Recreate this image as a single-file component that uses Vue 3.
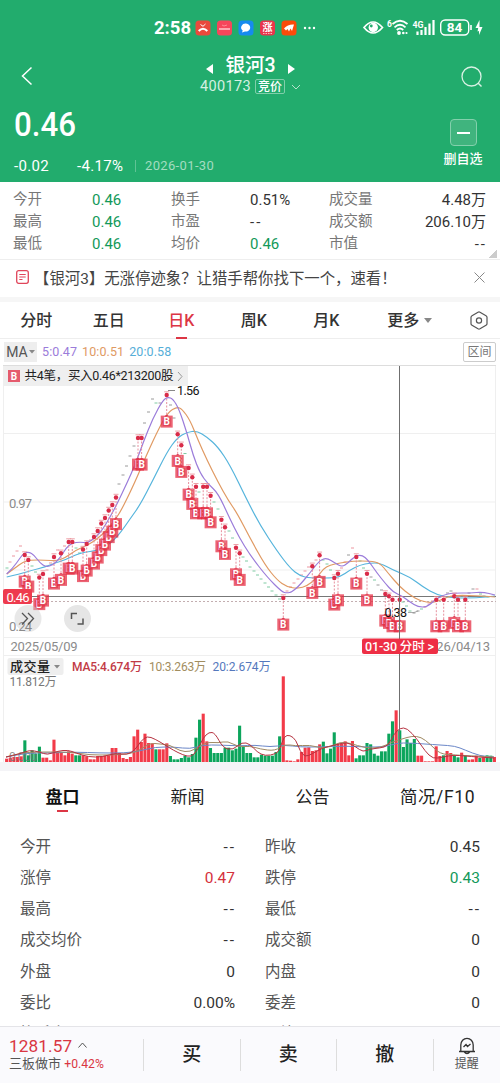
<script setup>
const quotes = [
  ['今开', '0.46', '换手', '0.51%', '成交量', '4.48万'],
  ['最高', '0.46', '市盈', '--', '成交额', '206.10万'],
  ['最低', '0.46', '均价', '0.46', '市值', '--']
]

const periods = ['分时', '五日', '日K', '周K', '月K']
const tabs = ['盘口', '新闻', '公告', '简况/F10']

const details = [
  ['今开', '--', '昨收', '0.45'],
  ['涨停', '0.47', '跌停', '0.43'],
  ['最高', '--', '最低', '--'],
  ['成交均价', '--', '成交额', '0'],
  ['外盘', '0', '内盘', '0'],
  ['委比', '0.00%', '委差', '0'],
  ['换手率', '', '量比', '']
]

const color = (v) => ({ up: v === '0.47', down: v === '0.43' || v === '0.46', dash: v === '--' })

// buy points: x, y of the dot on the candle
const buys = [
  [24.7, 555], [28.3, 560], [39.3, 577.5], [43, 574], [54, 557], [61, 553.3], [68.7, 542], [72.3, 542],
  [83, 549.5], [86.7, 544], [94, 537], [97.7, 531], [101.3, 523.5], [105, 518], [108.7, 510.5], [112.3, 505],
  [116, 497.5], [138, 438], [141.6, 438], [166.7, 395], [177.7, 434.3], [181.3, 445.3], [188.6, 468],
  [192.3, 477.3], [196, 486.7], [203.2, 486.7], [207, 486.7], [210.6, 495.7], [221.4, 519.7], [225, 527.3],
  [236, 547.7], [239.7, 553.3], [283.3, 598], [312.3, 566.3], [319.6, 555.3], [334.3, 578], [338, 573.7],
  [356.3, 557], [367, 573.7], [385.3, 594], [389, 596.3], [392.5, 599.7], [399.7, 599.7], [436.3, 599.7],
  [443.7, 599.7], [454.3, 596.3], [458, 599.7], [465.3, 599.7]
]

// flat candles
const ticks = [
  [7, 568, 'g'], [10, 562, 'r'], [13.5, 556, 'r'], [17, 551, 'r'], [20.5, 546, 'r'], [32, 566, 'g'], [35.5, 572, 'g'],
  [47, 570, 'r'], [50.5, 563, 'r'], [57.5, 550, 'r'], [64.5, 546, 'r'], [76, 548, 'g'], [79.5, 553, 'g'], [90.5, 540, 'r'],
  [119, 484, 'k'], [123, 475, 'k'], [126.5, 466, 'k'], [130, 456, 'k'], [134, 446, 'k'], [144.5, 423, 'k'],
  [148.5, 412, 'k'], [152.5, 399, 'k'], [156, 403, 'g'], [160, 403, 'k'], [170.5, 405, 'k'], [174, 418, 'k'],
  [185, 453.5, 'g'], [199, 492, 'g'], [214, 502, 'g'], [218, 509, 'g'], [229, 531, 'g'], [232.5, 538, 'g'],
  [243, 557, 'g'], [246.5, 561, 'g'], [250, 567, 'g'], [254, 571, 'g'], [257.5, 575, 'g'], [261, 579, 'g'],
  [265, 583, 'g'], [268.5, 587, 'g'], [272, 591, 'g'], [276, 595, 'g'], [279.5, 599, 'g'], [287, 591, 'r'],
  [290.5, 587, 'r'], [294, 583, 'r'], [298, 579, 'r'], [301.5, 575, 'r'], [305, 571, 'r'], [308.5, 567, 'r'],
  [316, 560, 'r'], [323, 560, 'g'], [327, 564, 'g'], [330.5, 570, 'g'], [341.5, 568, 'r'], [345, 562, 'r'],
  [348.5, 555, 'k'], [352.5, 548, 'r'], [360, 561, 'g'], [363.5, 568, 'g'], [371, 577, 'k'], [374.5, 580, 'g'],
  [378, 585, 'k'], [381.5, 590, 'k'], [403, 602, 'g'], [406.5, 606, 'g'], [410, 611, 'g'], [414, 613, 'k'],
  [418, 611, 'k'], [421.5, 609, 'g'], [425, 607, 'r'], [429, 604, 'r'], [432.5, 601, 'r'], [440, 597, 'k'],
  [447.5, 593, 'k'], [451, 591, 'k'], [461.5, 596, 'g'], [469, 593, 'k'], [473, 589, 'k'], [477, 589, 'r'],
  [480.5, 594, 'g'], [484, 596, 'g'], [488, 597, 'g']
]
const tickColor = { g: '#7fcba3', r: '#ec959f', k: '#9a9a9a' }

const ma5 = [
  [6.7, 574], [13, 568], [20, 558], [24, 553], [29, 552], [34, 555], [40, 563], [46, 567], [53, 565], [60, 558],
  [66, 548], [72, 543], [80, 542], [88, 543], [96, 537], [103, 529], [110, 517], [116, 506], [127, 483], [135, 465],
  [143, 443], [153, 418], [163, 400], [168, 397], [173, 399], [179, 409], [187, 433], [193, 455], [200, 473],
  [208, 484], [218, 493], [230, 519], [239, 537], [250, 555], [267, 577], [282, 592], [287, 593], [292, 592],
  [300, 585], [313, 569], [320, 560], [327, 558], [335, 563], [342, 567], [348, 563], [355, 556], [362, 555],
  [368, 560], [377, 573], [385, 583], [393, 592], [402, 596], [410, 602], [418, 607], [427, 607], [435, 600],
  [443, 595], [453, 593], [470, 593], [483, 592], [495, 595]
]
const ma10 = [
  [6.7, 574], [15, 568], [23, 562], [30, 560], [45, 560], [56, 561], [65, 558], [76, 550], [88, 545], [97, 539],
  [106, 531], [115, 520], [122, 509], [135, 482], [143, 463], [157, 432], [168, 412], [177, 407], [182, 409],
  [190, 420], [198, 440], [207, 460], [218, 482], [228, 500], [237, 513], [250, 538], [265, 565], [277, 580],
  [287, 587], [298, 588.5], [307, 586], [317, 578], [323, 569], [330, 565], [340, 563], [353, 561], [370, 561],
  [380, 563], [388, 573], [400, 587], [410, 595], [420, 601], [433, 603], [443, 599], [453, 595], [483, 596], [495, 597]
]
const ma20 = [
  [6.7, 577], [20, 574], [33, 570], [45, 567], [55, 563], [65, 560], [75, 555], [85, 552], [95, 551], [105, 547],
  [113, 541], [121, 532], [130, 519], [140, 505], [153, 480], [167, 452], [177, 438], [187, 432], [197, 431],
  [207, 437], [218, 447], [230, 465], [247, 500], [260, 525], [277, 551], [290, 568], [300, 576], [310, 578],
  [330, 578], [340, 577], [350, 570], [360, 565], [370, 563], [380, 563], [393, 570], [410, 577], [423, 587],
  [437, 595], [453, 598], [477, 598], [495, 596]
]

// volume bars, signed: positive = red, negative = green
const volumes = [
  10, 13, 15, 15, 17, -65, -20, -35, -25, -46, 13, 13, 5, 67, 30, 30, 20, 32, 25, -20, -20, 20, 17, 8, 8, 18, 18, 19,
  20, 42, 42, 27, 12, 9, 15, 77, 97, 60, 85, 57, 56, -38, 38, 38, 56, -18, -8, -8, -12, -19, -14, -24, -73, -127,
  145, 62, -42, -27, -27, -27, -43, -43, -35, -40, -109, -47, -27, -27, -14, -14, -22, -19, -19, -19, -30, -77, 257,
  5, 4, 2, 8, 30, 43, 44, 33, 35, 53, -61, -26, -40, -89, 54, 54, 62, 20, 63, -11, -20, -20, -57, -53, -25, -19,
  -32, -32, -85, -122, 155, -95, -45, -68, -57, -69, 19, 19, 2, 2, 2, 47, 18, -20, 33, 27, -18, -14, 28, -19, 7, 8,
  19, -12, 14, -20, -19, 15
]

const vol5 = [
  [6, 757], [20, 754], [29, 750], [40, 752], [47, 755], [58, 751], [68, 750], [76, 753], [88, 757], [103, 757],
  [115, 753], [127, 755], [135, 750], [141, 741], [147, 736], [155, 739], [165, 745], [173, 750], [183, 755],
  [191, 757], [197, 751], [203, 738], [209, 732], [215, 733], [223, 748], [233, 750], [242, 742], [250, 744],
  [257, 752], [265, 756], [276, 754], [280, 749], [284, 736], [290, 735], [296, 740], [300, 751], [305, 757],
  [312, 754], [322, 748], [335, 745], [347, 742], [356, 747], [363, 752], [370, 749], [380, 748], [388, 746],
  [394, 734], [400, 728], [407, 728], [417, 739], [425, 751], [433, 759], [443, 757], [454, 755], [465, 756], [478, 757], [494, 758]
]
const vol10 = [
  [6, 757], [20, 753], [35, 752], [50, 752], [70, 752], [90, 755], [110, 755], [130, 754], [140, 750], [150, 743],
  [160, 744], [170, 745], [180, 751], [190, 752], [200, 746], [208, 742], [218, 743], [228, 741], [238, 747],
  [250, 746], [260, 749], [275, 751], [285, 744], [295, 746], [310, 745], [320, 748], [330, 747], [340, 742],
  [350, 743], [365, 748], [380, 748], [392, 742], [402, 739], [412, 736], [421, 737], [430, 744], [440, 754], [455, 755], [475, 756], [494, 757]
]
const vol20 = [
  [6, 757], [25, 753], [50, 753], [75, 752], [100, 753], [125, 753], [140, 751], [155, 747], [175, 747], [190, 749],
  [203, 745], [220, 745], [240, 746], [255, 745], [270, 747], [285, 745], [300, 747], [320, 747], [345, 746],
  [365, 747], [385, 747], [397, 743], [410, 743], [425, 744], [440, 745], [455, 746], [465, 750], [480, 756], [494, 757]
]

// smooth line through the points
const curve = (p) => {
  let d = `M${p[0]}`
  for (let i = 1; i < p.length - 1; i++) {
    d += ` Q${p[i]} ${(p[i][0] + p[i + 1][0]) / 2},${(p[i][1] + p[i + 1][1]) / 2}`
  }
  return d + ` L${p[p.length - 1]}`
}
</script>

<template>
  <div class="page">
    <header class="top">
      <div class="status">
        <span class="clock">2:58</span>
        <svg class="apps" width="122" height="16" viewBox="0 0 122 16">
          <rect x="0.5" y="0.5" width="15" height="15" rx="3.5" fill="#e94a3c" />
          <path d="M5.5 4.5L8 6.300L10.500 4" stroke="#fff" stroke-width="1" fill="none" />
          <path d="M3.700 11Q8 6.500 12.300 11" stroke="#fff" stroke-width="2" fill="none" />
          <rect x="22" y="0.5" width="15" height="15" rx="3.5" fill="#f5465b" />
          <path d="M24 9H35" stroke="#ffc9cb" stroke-width="1.5" /><path d="M27 5l2 1 3-1" stroke="#ff8994" fill="none" />
          <rect x="43.5" y="0.5" width="15" height="15" rx="3.5" fill="#168bef" />
          <path d="M51 3.5a4.7 4 0 1 1-1 8l-3 1 .7-2A4.5 4 0 0 1 51 3.5" fill="#fff" />
          <rect x="65" y="0.5" width="15" height="15" rx="3.5" fill="#e9354d" />
          <text x="72.5" y="10.5" text-anchor="middle" font-size="10" font-weight="700" fill="#fff">涨</text>
          <path d="M68 13.5h9" stroke="#ffb6bd" stroke-dasharray="1.5 1" />
          <rect x="86.5" y="0.5" width="15" height="15" rx="3.5" fill="#fa4b0a" />
          <path d="M89 8.5Q93 4 99 4.500L97 11l-1.500-2.500-1.500 3-1.500-2.500-1.500 1.500z" fill="#fff" />
          <circle cx="110" cy="8" r="1.200" fill="#fff" /><circle cx="114.500" cy="8" r="1.200" fill="#fff" /><circle cx="119" cy="8" r="1.200" fill="#fff" />
        </svg>
        <svg class="signals" width="122" height="20" viewBox="362 18 122 20">
          <path d="M364 27.500Q373 16.500 382.500 27.500Q373 38.500 364 27.500Z" fill="none" stroke="#fff" stroke-width="1.700" />
          <circle cx="373.300" cy="27.500" r="4.700" fill="#fff" /><circle cx="371.300" cy="26" r="1.400" fill="#22ac6d" />
          <text x="387" y="27" font-size="8.500" font-weight="700" fill="#fff">6</text>
          <path d="M392.500 24Q400 17.500 407.500 24M394.500 27.300Q400 22.300 405.500 27.300M396.800 30Q400 27 403.200 30" fill="none" stroke="#fff" stroke-width="1.800" />
          <circle cx="399" cy="33" r="1.900" fill="#fff" /><circle cx="403.300" cy="33" r="1.300" fill="#fff" /><circle cx="406.500" cy="33" r="1.100" fill="#fff" />
          <text x="412.500" y="27.500" font-size="9" font-weight="700" fill="#fff" textLength="11" lengthAdjust="spacingAndGlyphs">4G</text>
          <path d="M417.500 31.500V35M421.500 30V35M425.500 27V35M429.500 23.500V35M433.500 20V35" stroke="#fff" stroke-width="2.200" />
          <rect x="440.700" y="20" width="28" height="15" rx="4.500" fill="none" stroke="#fff" stroke-width="1.400" />
          <path d="M471 25V30" stroke="#fff" stroke-width="1.600" />
          <text x="454.600" y="32.200" text-anchor="middle" font-size="13.500" font-weight="700" fill="#fff">84</text>
          <path d="M479.500 20L475.500 28H478.200L477.500 31.500L479 31V35L482.500 27H479.500Z" fill="#fff" />
        </svg>
      </div>
      <div class="nav">
        <svg width="12" height="20" viewBox="0 0 12 20"><path d="M10.500 1.500L1.500 10L10.500 18.500" fill="none" stroke="#fff" stroke-width="1.500" /></svg>
        <div class="title">
          <div class="name">
            <svg width="7" height="10" viewBox="0 0 7 10"><path d="M7 0V10L0 5z" fill="#fff" /></svg>
            <b>银河3</b>
            <svg width="7" height="10" viewBox="0 0 7 10"><path d="M0 0V10L7 5z" fill="#fff" /></svg>
          </div>
          <div class="code">
            <span>400173</span><em>竞价</em>
            <svg width="10" height="6" viewBox="0 0 10 6"><path d="M1 1L5 5L9 1" fill="none" stroke="#b5e2cb" /></svg>
          </div>
        </div>
        <svg class="search" width="22" height="22" viewBox="0 0 22 22"><circle cx="10.500" cy="10.500" r="9.500" fill="none" stroke="#d9f1e4" stroke-width="1.300" /><path d="M17 17L20.500 20.500" stroke="#d9f1e4" stroke-width="1.400" /></svg>
      </div>
      <div class="price">
        <div>
          <div class="now">0.46</div>
          <div class="change"><span>-0.02</span><span>-4.17%</span><time>2026-01-30</time></div>
        </div>
        <div class="remove"><i></i><span>删自选</span></div>
      </div>
    </header>

    <section class="quotes">
      <div v-for="q in quotes" :key="q[0]" class="quote">
        <label>{{ q[0] }}</label><span :class="color(q[1])">{{ q[1] }}</span>
        <label>{{ q[2] }}</label><span :class="color(q[3])">{{ q[3] }}</span>
        <label>{{ q[4] }}</label><span class="right" :class="color(q[5])">{{ q[5] }}</span>
      </div>
    </section>

    <div class="notice">
      <svg width="13" height="14" viewBox="0 0 13 14"><rect x="0.700" y="0.700" width="11.600" height="12.600" rx="2" fill="none" stroke="#e0455a" stroke-width="1.300" /><path d="M3.300 4.500H9.700M3.300 7H9.700M3.300 9.500H6.500" stroke="#e0455a" stroke-width="1.200" /></svg>
      <p>【银河3】无涨停迹象？让猎手帮你找下一个，速看！</p>
      <svg width="11" height="11" viewBox="0 0 11 11"><path d="M.5.5l10 10M10.500.5l-10 10" stroke="#888" /></svg>
    </div>

    <nav class="periods">
      <span v-for="p in periods" :key="p" :class="{ active: p === '日K' }">{{ p }}</span>
      <span>更多<svg width="8" height="5" viewBox="0 0 8 5"><path d="M0 0H8L4 5z" fill="#888" /></svg></span>
      <svg class="gear" width="18" height="19" viewBox="0 0 18 19"><path d="M8 1.200Q9 .7 10 1.200L16 4.700Q17 5.300 17 6.300V12.700Q17 13.700 16 14.300L10 17.800Q9 18.300 8 17.800L2 14.300Q1 13.700 1 12.700V6.300Q1 5.300 2 4.700Z" fill="none" stroke="#555" stroke-width="1.200" /><circle cx="9" cy="9.500" r="2.600" fill="none" stroke="#555" stroke-width="1.200" /></svg>
    </nav>

    <div class="ma">
      <span class="pick">MA<svg width="6" height="4" viewBox="0 0 6 4"><path d="M0 0H6L3 3.500z" fill="#888" /></svg></span>
      <span class="m5">5:0.47</span><span class="m10">10:0.51</span><span class="m20">20:0.58</span>
      <span class="range">区间</span>
    </div>

    <svg class="chart" width="500" height="398" viewBox="0 364 500 398">
      <g stroke="#efefef">
        <path d="M3.500 365V762M495.500 365V762M3 433.500H496M3 502H496M3 570H496M3 637.500H496M3 655.500H496" />
        <path d="M3 365.500H496" stroke="#ddd" />
      </g>
      <g font-size="13" fill="#8b8b8b">
        <text x="9" y="507.500" textLength="23">0.97</text>
        <text x="10.500" y="651" textLength="67">2025/05/09</text>
        <text x="422" y="651" textLength="68">2026/04/13</text>
      </g>
      <path d="M3 601.500H496" stroke="#c3aeb0" stroke-dasharray="2 2" />
      <path d="M3 596.500H496" stroke="#777" stroke-width="1.200" />

      <path v-for="t in ticks" :key="t[0]" :d="`M${t[0] - 1.500} ${t[1]}h3`" :stroke="tickColor[t[2]]" />
      <path :d="curve(ma20)" class="line" stroke="#55b4dc" />
      <path :d="curve(ma10)" class="line" stroke="#e09a63" />
      <path :d="curve(ma5)" class="line" stroke="#9b7cda" />

      <g v-for="b in buys" :key="b[0]">
        <path :d="`M${b[0]} ${b[1]}v21`" stroke="#e78f9d" stroke-dasharray="2 1.500" />
        <path :d="`M${b[0] - 2.500} ${b[1] - 3.200}h5`" stroke="#e98791" stroke-width="0.800" />
        <circle :cx="b[0]" :cy="b[1]" r="2.200" fill="#d92b48" />
        <path :d="`M${b[0] - 2} ${b[1] + 21}l2 -1.500l2 1.500z`" fill="#dc3f58" />
        <rect :x="b[0] - 6" :y="b[1] + 20.600" width="12" height="12" fill="#e4283f" fill-opacity="0.720" />
        <rect :x="b[0] - 4" :y="b[1] + 22.600" width="8" height="8.500" fill="#e2465b" />
        <text :x="b[0]" :y="b[1] + 30.200" text-anchor="middle" font-size="10" font-weight="700" fill="#fff">B</text>
      </g>

      <rect x="4" y="366" width="184" height="20" fill="#eee" fill-opacity="0.950" />
      <rect x="8" y="370" width="12" height="12" fill="#e55b6d" />
      <text x="14" y="379.700" text-anchor="middle" font-size="10" font-weight="700" fill="#fff">B</text>
      <text x="24.500" y="380" font-size="12.500" fill="#222" textLength="149">共4笔，买入0.46*213200股</text>
      <path d="M178 372L182 376.500L178 381" fill="none" stroke="#999" />

      <path d="M168 390.500h7" stroke="#555" stroke-width="0.700" />
      <text x="177" y="395" font-size="12.500" fill="#111" textLength="22.500">1.56</text>
      <text x="384.500" y="616.500" font-size="12.500" fill="#111" textLength="22.500">0.38</text>
      <path d="M408 612.500h6l4-1.500" stroke="#888" stroke-width="0.700" fill="none" />

      <rect x="3" y="589" width="29" height="15" rx="2" fill="#ee3b4e" />
      <text x="6.500" y="601.500" font-size="13" fill="#fff" textLength="23">0.46</text>

      <circle cx="28" cy="618.500" r="13.500" fill="#ccc" fill-opacity="0.450" />
      <text x="9" y="631" font-size="13" fill="#8b8b8b" textLength="23">0.24</text>
      <path d="M22 613L27.500 618.500L22 624.500M28 613L33.500 618.500L28 624.500" fill="none" stroke="#555" stroke-width="1.300" />
      <circle cx="77.500" cy="618.500" r="13.500" fill="#e6e6e6" />
      <path d="M71.500 619V613.500H77M83 618.500V624H77.500" fill="none" stroke="#555" stroke-width="1.500" />

      <rect x="7.500" y="658" width="56" height="17" rx="2" fill="#eee" />
      <text x="10" y="671" font-size="13" font-weight="500" fill="#222" textLength="40">成交量</text>
      <path d="M54 665H60L57 668.500z" fill="#888" />
      <g font-size="12">
        <text x="72" y="671" fill="#c23a45" font-weight="500" textLength="70">MA5:4.674万</text>
        <text x="149" y="671" fill="#a28d5e" textLength="57">10:3.263万</text>
        <text x="212.500" y="671" fill="#5578bd" textLength="58">20:2.674万</text>
      </g>
      <text x="9.500" y="686" font-size="12" fill="#777" textLength="47">11.812万</text>

      <rect v-for="(v, i) in volumes" :key="i" :x="5.100 + i * 3.640" :y="762 - Math.abs(v) / 3"
        width="3.100" :height="Math.abs(v) / 3" :fill="v > 0 ? '#f23b49' : '#0ca55c'" />
      <text x="9" y="760.500" font-size="12" fill="#777" fill-opacity="0.800" textLength="28">0.000</text>
      <path :d="curve(vol20)" class="vol" stroke="#6b87c8" />
      <path :d="curve(vol10)" class="vol" stroke="#a08a64" />
      <path :d="curve(vol5)" class="vol" stroke="#b63240" />

      <path d="M399.500 366V762" stroke="#6f6f6f" />
      <rect x="362" y="638.500" width="76" height="15.500" rx="2" fill="#ee2f45" />
      <text x="365" y="651" font-size="12.500" font-weight="500" fill="#fff" textLength="69">01-30 分时 &gt;</text>
    </svg>

    <nav class="tabs">
      <span v-for="t in tabs" :key="t" :class="{ active: t === '盘口' }">{{ t }}</span>
    </nav>

    <section class="details">
      <div v-for="d in details" :key="d[0]" class="detail">
        <label>{{ d[0] }}</label><span :class="color(d[1])">{{ d[1] }}</span>
        <label>{{ d[2] }}</label><span :class="color(d[3])">{{ d[3] }}</span>
      </div>
    </section>

    <footer class="bottom">
      <div class="index">
        <div class="value">1281.57<svg width="9" height="6" viewBox="0 0 9 6"><path d="M.5 5.500L4.500 1L8.500 5.500" fill="none" stroke="#555" /></svg></div>
        <div class="market">三板做市 <span>+0.42%</span></div>
      </div>
      <b>买</b><b>卖</b><b>撤</b>
      <div class="remind">
        <svg width="18" height="18" viewBox="0 0 18 18"><path d="M1 14.500H17M2.800 14.500V8A6.200 6.700 0 0 1 15.200 8V14.500M6 14.500Q9 18.500 12 14.500M5.500 10L8 7.500L9.500 9.500L12.500 7" fill="none" stroke="#333" stroke-width="1.300" /></svg>
        <span>提醒</span>
      </div>
    </footer>
  </div>
</template>

<style>
body {
  background: #fff;
  overflow: hidden;
}
</style>

<style scoped>
.page {
  width: 500px;
  height: 1083px;
  overflow: hidden;
  display: flex;
  flex-direction: column;
  background: #fff;
  color: #333;
  font-family: Roboto, "Noto Sans CJK SC", sans-serif;
}

.page > * {
  flex-shrink: 0;
  box-sizing: border-box;
}

svg {
  display: block;
}

.top {
  height: 182px;
  background: #22ac6d;
  color: #fff;
}

.status {
  height: 38px;
  padding: 18px 16px 0 154px;
  display: flex;
  align-items: center;
  box-sizing: border-box;
}

.clock {
  width: 41px;
  font-size: 18.5px;
  font-weight: 700;
}

.signals {
  margin-left: auto;
}

.nav {
  height: 62px;
  padding: 0 17px 0 21px;
  display: flex;
  justify-content: space-between;
  box-sizing: border-box;
}

.nav > svg {
  margin-top: 28px;
}

.title {
  padding: 11px 0 0 7px;
}

.name {
  display: flex;
  align-items: center;
  justify-content: center;
  gap: 12px;
  height: 28px;
}

.name svg {
  margin-top: 12px;
}

.name b {
  font-size: 19.5px;
  font-weight: 500;
}

.code {
  display: flex;
  align-items: center;
  height: 19px;
  font-size: 14.5px;
  letter-spacing: 0.35px;
  color: #d5f0e2;
}

.code em {
  height: 13px;
  margin: 0 6px 0 4px;
  padding: 0 2px;
  border: 1px solid #80ceaa;
  border-radius: 2px;
  font: 500 12px/12px "Noto Sans CJK SC", sans-serif;
  letter-spacing: 0;
  color: #fff;
}

.nav .search {
  margin-top: 28px;
}

.price {
  display: flex;
  justify-content: space-between;
  padding: 0 16px 0 14px;
}

.now {
  height: 48px;
  font-size: 34px;
  font-weight: 500;
  line-height: 49px;
  transform: scaleX(0.92);
  transform-origin: left;
}

.change {
  margin-top: 8px;
  display: flex;
  align-items: center;
  height: 20px;
  font-size: 15px;
}

.change span {
  width: 63px;
  letter-spacing: 0.3px;
}

.change span + span {
  width: 57px;
}

.change time {
  margin-left: 1px;
  padding-left: 9px;
  border-left: 1px solid #60c395;
  font-size: 13px;
  line-height: 12px;
  letter-spacing: 0.35px;
  color: #a3dcc0;
}

.remove {
  width: 42px;
  padding-top: 19px;
  display: flex;
  flex-direction: column;
  align-items: center;
  font-size: 13px;
  font-weight: 500;
  white-space: nowrap;
}

.remove i {
  display: flex;
  width: 25px;
  height: 25px;
  border: 1px solid #83d0ac;
  border-radius: 4px;
  background: #40b47e;
  align-items: center;
  justify-content: center;
}

.remove i::after {
  content: "";
  width: 13px;
  height: 2px;
  background: #fff;
}

.remove span {
  margin-top: 3px;
  line-height: 20px;
}

.quotes {
  height: 78px;
  padding: 7px 14px 0 13px;
  border-bottom: 1px solid #eee;
  background: linear-gradient(135deg, transparent 50%, #ccc 50%) 489px 68px / 8px 8px no-repeat;
}

.quote {
  display: grid;
  grid-template-columns: 79px 79px 79px 79px 80px 1fr;
  height: 22px;
  line-height: 22px;
  font-size: 15px;
}

label {
  color: #777;
  font-size: 14.5px;
}

.right {
  text-align: right;
}

.up {
  color: #d5303c;
}

.down {
  color: #12995a;
}

.dash {
  letter-spacing: 2px;
}

.right.dash,
.detail .dash {
  position: relative;
  left: 1px;
}

.notice {
  height: 42px;
  padding: 2px 15px 5px 16px;
  border-bottom: 5px solid #f6f6f6;
  display: flex;
  align-items: center;
}

.notice p {
  flex: 1;
  margin: 0 0 0 5px;
  font-size: 15.4px;
  color: #444;
  white-space: nowrap;
}

.periods {
  height: 37px;
  padding-right: 12px;
  border-bottom: 1px solid #eee;
  display: flex;
  align-items: center;
}

.periods span {
  width: 72.5px;
  text-align: center;
  font-size: 16px;
  font-weight: 500;
  line-height: 37px;
  color: #333;
}

.periods span:nth-child(6) {
  margin-left: 11px;
  display: flex;
  align-items: center;
  justify-content: center;
  gap: 5px;
}

.periods .gear {
  margin-left: auto;
}

.periods .active {
  color: #dc3645;
  background: linear-gradient(#dc3645, #dc3645) center bottom / 11px 2px no-repeat;
}

.ma {
  height: 25px;
  padding: 1px 4px 1px 4px;
  display: flex;
  align-items: center;
  font-size: 12.5px;
}

.ma span {
  margin-right: 5px;
  letter-spacing: 0.1px;
}

.ma .pick {
  width: 33px;
  height: 20px;
  display: flex;
  align-items: center;
  justify-content: center;
  gap: 1px;
  background: #eee;
  font-size: 14px;
  color: #555;
}

.ma .m5 {
  color: #9b7cda;
}

.ma .m10 {
  color: #e09a63;
}

.ma .m20 {
  color: #55aed8;
}

.ma .range {
  width: 33px;
  height: 20px;
  margin: 1px 0 0 auto;
  border: 1px solid #ccc;
  border-radius: 2px;
  box-sizing: border-box;
  text-align: center;
  font-size: 12px;
  line-height: 18px;
  color: #777;
}

.chart {
  font-family: Roboto, "Noto Sans CJK SC", sans-serif;
}

.line {
  fill: none;
  stroke-width: 1.2;
}

.vol {
  fill: none;
  stroke-width: 1;
}

.tabs {
  height: 58px;
  border-top: 9px solid #f4f4f7;
  display: flex;
}

.tabs span {
  width: 125px;
  text-align: center;
  font-size: 17px;
  line-height: 53px;
  color: #222;
}

.tabs span:last-child {
  font-size: 17.5px;
  letter-spacing: 0.6px;
}

.tabs .active {
  font-weight: 700;
  color: #111;
  background: linear-gradient(#dc3645, #dc3645) center 39px / 11px 2px no-repeat;
}

.details {
  height: 206px;
  padding: 11px 20px 0;
  overflow: hidden;
}

.detail {
  display: grid;
  grid-template-columns: 100px 115px 130px 115px;
  height: 31.15px;
  line-height: 32px;
  font-size: 15.5px;
}

.detail label {
  font-size: 15.5px;
  color: #555;
}

.detail span {
  text-align: right;
}

.detail label:nth-child(3) {
  margin-left: 30px;
}

.bottom {
  height: 57px;
  border-top: 1px solid #e4e4e8;
  background: #fafafd;
  display: flex;
  align-items: center;
}

.index {
  width: 143px;
  padding-left: 9px;
  box-sizing: border-box;
}

.value {
  display: flex;
  align-items: center;
  gap: 6px;
  height: 18px;
  font-size: 17.2px;
  letter-spacing: 0.1px;
  color: #d93642;
}

.value svg {
  margin-top: -3px;
}

.market {
  font-size: 13px;
  line-height: 17px;
  color: #555;
}

.market span {
  color: #d93642;
  font-size: 12.2px;
}

.bottom b {
  width: 96.5px;
  height: 32px;
  border-left: 1px solid #ddd;
  box-sizing: border-box;
  text-align: center;
  font-size: 19px;
  font-weight: 500;
  line-height: 31px;
  color: #222;
}

.remind {
  flex: 1;
  height: 32px;
  border-left: 1px solid #ddd;
  display: flex;
  flex-direction: column;
  align-items: center;
  justify-content: center;
  font-size: 12px;
  line-height: 19px;
  color: #555;
}

.remind svg {
  flex-shrink: 0;
}
</style>
